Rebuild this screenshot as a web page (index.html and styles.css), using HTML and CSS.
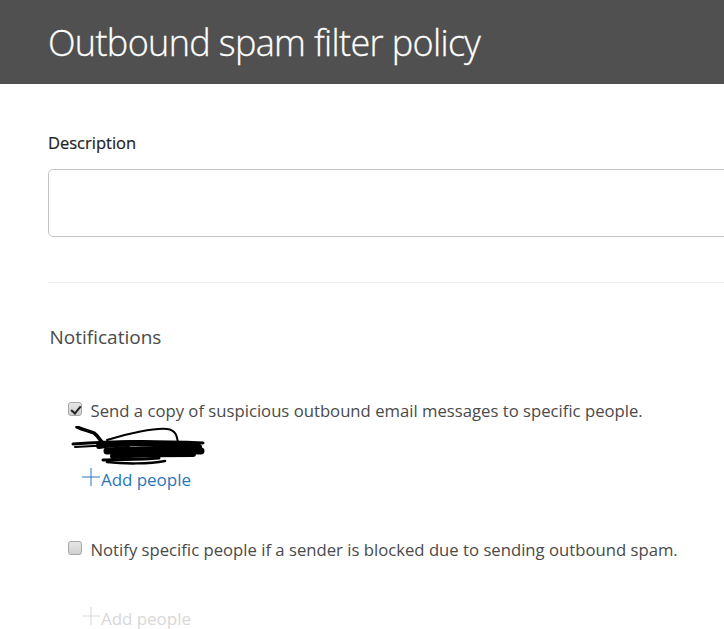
FILE: index.html
```html
<!DOCTYPE html>
<html lang="en">

<head>
    <meta charset="UTF-8">
    <meta name="viewport" content="width=device-width, initial-scale=1.0">
    <title>Outbound spam filter policy</title>
    <link rel="stylesheet" href="styles.css">
</head>

<body>
    <!-- header -->
    <div class="header">
        <h1>Outbound spam filter policy</h1>
    </div>

    <div class="content">
        <label class="field-label" for="desc">Description</label>
        <textarea id="desc" class="desc"></textarea>
        <div class="divider"></div>

        <h2>Notifications</h2>

        <div class="option first">
            <input type="checkbox" id="copy" class="check" checked>
            <label for="copy">Send a copy of suspicious outbound email messages to specific people.</label>
        </div>
        <!-- scribbled out address -->
        <svg class="scribble" width="140" height="40" viewBox="0 0 140 40">
            <g fill="none" stroke="#000" stroke-linecap="round">
                <path d="M8 1 C14 4 20 5 25 7 C29 10 30 13 33 16" stroke-width="3.5"/>
                <path d="M38 14 C60 7 85 2 98 3 C107 4 108 10 109 17" stroke-width="2"/>
                <path d="M4 18 C40 15 90 15 134 17" stroke-width="3"/>
                <path d="M6 21 C30 19 45 19 60 20" stroke-width="2"/>
                <path d="M30 20 C60 15 90 18 130 21" stroke-width="6"/>
                <path d="M38 25 C70 23 100 24 132 25" stroke-width="7"/>
                <path d="M44 30 C70 28 95 28 124 28" stroke-width="6"/>
                <path d="M34 34 C50 33 70 34 90 32" stroke-width="3"/>
                <path d="M38 36 C55 38 80 38 96 35" stroke-width="2.5"/>
            </g>
        </svg>
        <div class="add-people">
            <svg class="plus" width="20" height="20" viewBox="0 0 20 20">
                <path d="M10 1V19M1 10H19" stroke="currentColor" stroke-width="1" fill="none"/>
            </svg>
            <span>Add people</span>
        </div>

        <div class="option second">
            <input type="checkbox" id="notify" class="check">
            <label for="notify">Notify specific people if a sender is blocked due to sending outbound spam.</label>
        </div>
        <div class="add-people disabled">
            <svg class="plus" width="20" height="20" viewBox="0 0 20 20">
                <path d="M10 1V19M1 10H19" stroke="currentColor" stroke-width="1" fill="none"/>
            </svg>
            <span>Add people</span>
        </div>
    </div>
</body>

</html>
```
FILE: styles.css
```css
* {
    margin: 0;
    padding: 0;
    box-sizing: border-box;
}

html,
body {
    height: 100%;
    overflow: hidden;
}

body {
    background: #fff;
    font-family: "Open Sans", "Liberation Sans", sans-serif;
    color: #444;
}

.header {
    height: 84px;
    background: #505050;
    padding: 17px 0 0 48px;
}

.header h1 {
    font-size: 36px;
    line-height: 52px;
    font-weight: 300;
    color: #fff;
    letter-spacing: -0.65px;
    white-space: nowrap;
    -webkit-text-stroke: 0.3px #fff;
}

.content {
    padding: 47px 0 0 48px;
}

.field-label {
    display: block;
    font-size: 16.5px;
    line-height: 24px;
    color: #222;
    -webkit-text-stroke: 0.2px #222;
}

.desc {
    display: block;
    width: 700px;
    height: 68px;
    margin-top: 14px;
    border: 1px solid #c4c4c4;
    border-radius: 5px;
    background: #fff;
    resize: none;
    outline: none;
}

.divider {
    height: 1px;
    background: #ececec;
    margin-top: 45px;
}

h2 {
    font-size: 19px;
    line-height: 28px;
    font-weight: 400;
    color: #4a4a4a;
    margin: 40px 0 0 1.5px;
}

.option {
    display: flex;
    align-items: center;
    gap: 8.5px;
    margin-left: 20px;
    font-size: 16.7px;
    line-height: 24px;
    white-space: nowrap;
    color: #4a4a4a;
}

.option.first {
    margin-top: 48px;
}

.option.second {
    margin-top: 46px;
}

/* grey checkbox, the browser default one is too flat */
.check {
    appearance: none;
    position: relative;
    width: 14px;
    height: 14px;
    flex: none;
    margin-bottom: 4px;
    background: linear-gradient(#e6e6e6, #d0d0d0);
    border: 1px solid #a6a6a6;
    border-radius: 3px;
}

.check:checked::after {
    content: "";
    position: absolute;
    left: 3.5px;
    top: 0.5px;
    width: 4px;
    height: 8px;
    border: solid #222;
    border-width: 0 2px 2px 0;
    transform: rotate(40deg);
}

.scribble {
    display: block;
    margin: 3px 0 0 21px;
}

.add-people {
    display: flex;
    align-items: center;
    margin: 2px 0 0 33px;
    font-size: 17px;
    line-height: 24px;
    letter-spacing: -0.05px;
    color: #2a76bd;
}

.plus {
    flex: none;
    margin: -3px 0 3px;
}

.add-people.disabled {
    color: #d8d8d8;
    margin-top: 45px;
}
```
